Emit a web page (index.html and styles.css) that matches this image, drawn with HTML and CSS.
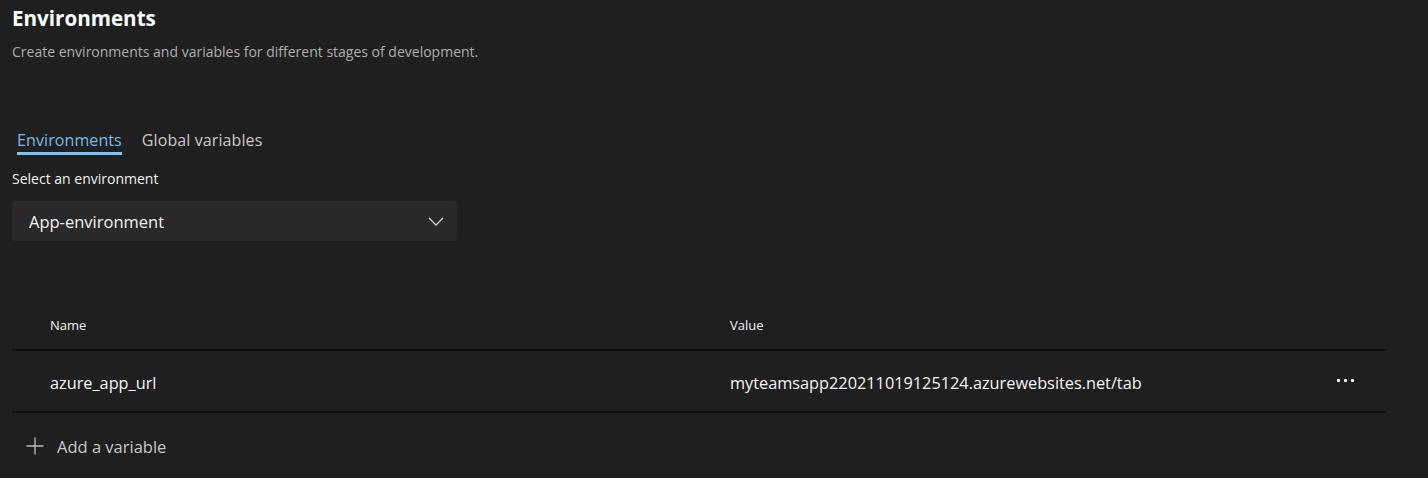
FILE: index.html
```html
<!DOCTYPE html>
<html>
<head>
<meta charset="utf-8">
<link rel="stylesheet" href="styles.css">
</head>
<body>
<div class="page">
  <h1 class="title">Environments</h1>
  <p class="subtitle">Create environments and variables for different stages of development.</p>

  <div class="tabs">
    <div class="tab active">Environments</div>
    <div class="tab">Global variables</div>
  </div>

  <div class="field-label">Select an environment</div>
  <div class="dropdown">
    <span class="dropdown-value">App-environment</span>
    <svg class="chevron" width="16" height="9" viewBox="0 0 16 9"><path d="M1 1 L8 8 L15 1" fill="none" stroke="#d6d6d6" stroke-width="1.3"/></svg>
  </div>

  <div class="table">
    <div class="row head">
      <div class="cell name">Name</div>
      <div class="cell value">Value</div>
      <div class="cell actions"></div>
    </div>
    <div class="row body">
      <div class="cell name">azure_app_url</div>
      <div class="cell value">myteamsapp220211019125124.azurewebsites.net/tab</div>
      <div class="cell actions"><span class="dots"><i></i><i></i><i></i></span></div>
    </div>
  </div>

  <div class="add">
    <svg class="plus" width="18" height="18" viewBox="0 0 18 18"><path d="M9 0.5 V17.5 M0.5 9 H17.5" stroke="#bdbdbd" stroke-width="1.3"/></svg>
    <span>Add a variable</span>
  </div>
</div>
</body>
</html>
```

FILE: styles.css
```css
html, body {
  margin: 0;
  padding: 0;
  background: #1f1f1f;
}
body {
  font-family: "Open Sans", "Noto Sans", sans-serif;
  color: #ffffff;
  width: 1428px;
  height: 478px;
  overflow: hidden;
}
.page {
  padding: 4px 42px 0 12px;
}
.title {
  margin: 0;
  font-size: 20.6px;
  font-weight: 700;
  line-height: 28px;
}
.subtitle {
  margin: 10px 0 0;
  font-size: 14px;
  line-height: 20px;
  color: #adadad;
}
.tabs {
  display: flex;
  gap: 20px;
  margin-top: 66px;
  padding-left: 5px;
}
.tab {
  font-size: 16px;
  line-height: 24px;
  color: #c8c8c8;
  border-bottom: 3px solid transparent;
  letter-spacing: 0.1px;
}
.tab.active {
  color: #7ab8e6;
  border-bottom-color: #7fc2f6;
}
.field-label {
  margin-top: 14px;
  font-size: 14px;
  line-height: 20px;
  color: #f0f0f0;
}
.dropdown {
  margin-top: 12px;
  width: 445px;
  height: 40px;
  box-sizing: border-box;
  background: #292929;
  border-radius: 4px;
  display: flex;
  align-items: center;
  justify-content: space-between;
  padding: 0 13px 0 17px;
}
.dropdown-value {
  font-size: 16.5px;
  color: #f2f2f2;
}
.table {
  margin-top: 58px;
}
.row {
  display: flex;
  align-items: center;
  border-bottom: 2px solid #111111;
}
.row.head {
  height: 50px;
}
.row.body {
  height: 60px;
  padding-top: 0;
}
.row.body .cell {
  padding-top: 3px;
}
.cell.name {
  width: 680px;
  padding-left: 38px;
}
.cell.value {
  flex: 1;
}
.cell.actions {
  width: 49px;
  display: flex;
  align-items: center;
}
.row.head .cell {
  font-size: 13px;
  font-weight: 500;
  color: #f0f0f0;
  padding-top: 1px;
}
.row.body .cell {
  font-size: 16.3px;
  color: #f5f5f5;
}
.dots {
  display: flex;
  gap: 4px;
  margin-top: -4px;
}
.dots i {
  width: 3px;
  height: 3px;
  background: #ffffff;
  border-radius: 1px;
}
.add {
  display: flex;
  align-items: center;
  gap: 13px;
  padding-left: 14px;
  height: 66px;
  font-size: 16.5px;
  color: #c8c8c8;
}
```
